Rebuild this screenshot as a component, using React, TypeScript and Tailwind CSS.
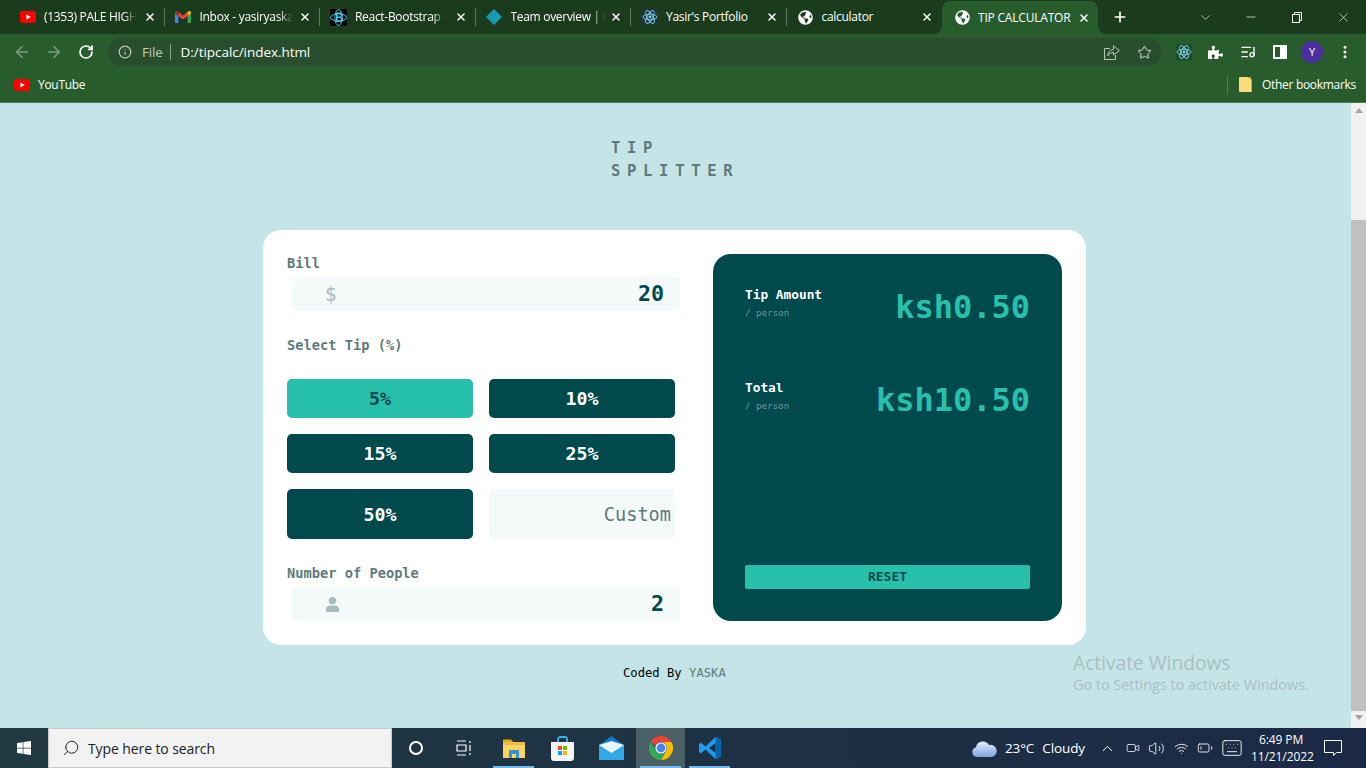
import type { ReactNode } from "react";
import {
  ArrowLeft,
  ArrowRight,
  BatteryLow,
  ChevronDown,
  ChevronUp,
  Info,
  Keyboard,
  ListMusic,
  Minus,
  MoreVertical,
  Plus,
  RotateCw,
  Search,
  Star,
  Video,
  Volume2,
  Wifi,
  X,
} from "lucide-react";
import { FaGlobeAmericas, FaPuzzlePiece, FaUser, FaWindows } from "react-icons/fa";

const uiFont = "font-['Open_Sans','Noto_Sans',sans-serif]";
const monoFont = "font-['DejaVu_Sans_Mono',monospace]";

function YoutubeIcon() {
  return (
    <svg width="16" height="12" viewBox="0 0 16 12">
      <rect width="16" height="12" rx="3" fill="#f00" />
      <path d="M6.4 3.4 10.8 6l-4.4 2.6z" fill="#fff" />
    </svg>
  );
}

function GmailIcon() {
  return (
    <svg width="16" height="12" viewBox="0 0 16 12">
      <path d="M0 2v9a1 1 0 0 0 1 1h2.4V5z" fill="#4285f4" />
      <path d="M16 2v9a1 1 0 0 1-1 1h-2.4V5z" fill="#34a853" />
      <path d="M3.4 5 8 8.4 12.6 5V1L8 4.4 3.4 1z" fill="#ea4335" />
      <path d="M0 2c0-2 2.2-2.6 3.4-1v4L0 2.6z" fill="#c5221f" />
      <path d="M16 2c0-2-2.2-2.6-3.4-1v4L16 2.6z" fill="#fbbc04" />
    </svg>
  );
}

function BootstrapIcon() {
  return (
    <svg width="17" height="17" viewBox="0 0 17 17" className="bg-black">
      <ellipse cx="8.5" cy="8.5" rx="3.6" ry="8" fill="none" stroke="#41c8e8" strokeWidth="1" />
      <ellipse cx="8.5" cy="8.5" rx="8" ry="3.6" fill="none" stroke="#41c8e8" strokeWidth="1" />
      <path d="M6 3.5h4a2.3 2.3 0 0 1 1 4.5 2.5 2.5 0 0 1-1 5H6zM7.6 5v2.6h2a1.3 1.3 0 0 0 0-2.6zM7.6 9v2.6h2.2a1.3 1.3 0 0 0 0-2.6z" fill="#41c8e8" />
    </svg>
  );
}

function DiamondIcon() {
  return (
    <svg width="16" height="16" viewBox="0 0 16 16">
      <path d="M8 0 16 8 8 16 0 8z" fill="#1a9bb0" />
    </svg>
  );
}

function ReactIcon({ box = false }: { box?: boolean }) {
  return (
    <svg width="16" height="16" viewBox="0 0 16 16" className={box ? "bg-[#1d4a2a]" : "bg-[#20343c]"}>
      <g fill="none" stroke="#7fd4ea" strokeWidth="0.9">
        <ellipse cx="8" cy="8" rx="7" ry="2.8" />
        <ellipse cx="8" cy="8" rx="7" ry="2.8" transform="rotate(60 8 8)" />
        <ellipse cx="8" cy="8" rx="7" ry="2.8" transform="rotate(120 8 8)" />
      </g>
      <circle cx="8" cy="8" r="1.4" fill="#7fd4ea" />
    </svg>
  );
}

function ChromeIcon() {
  return (
    <svg width="24" height="24" viewBox="0 0 24 24">
      <path d="M1.6 6A12 12 0 0 1 22.4 6H12a6 6 0 0 0-5.2 3z" fill="#ea4335" />
      <path d="M22.4 6A12 12 0 0 1 12 24l5.2-9a6 6 0 0 0 0-6 6 6 0 0 0-5.2-3z" fill="#fbbc04" />
      <path d="M12 24A12 12 0 0 1 1.6 6l5.2 9a6 6 0 0 0 5.2 3 6 6 0 0 0 5.2-3z" fill="#34a853" />
      <circle cx="12" cy="12" r="5.6" fill="#fff" />
      <circle cx="12" cy="12" r="4.4" fill="#4285f4" />
    </svg>
  );
}

function VsCodeIcon() {
  return (
    <svg width="24" height="24" viewBox="0 0 24 24">
      <path d="M17.5 1 23 3.6v16.8L17.5 23 7.6 13.6 3 17.2 1 16V8l2-1.2 4.6 3.6zM17.5 7 11 12l6.5 5z" fill="#1f9cf0" />
      <path d="M17.5 1 23 3.6v16.8L17.5 23z" fill="#0065a9" />
    </svg>
  );
}

function ExplorerIcon() {
  return (
    <svg width="22" height="20" viewBox="0 0 22 20">
      <path d="M0 1.5h8l2 2.5H0z" fill="#e5a823" />
      <rect y="4" width="22" height="16" fill="#fcd462" />
      <rect y="4" width="22" height="3" fill="#f2bd42" />
      <path d="M6 20v-8h10v8h-3v-4H9v4z" fill="#3a90d8" />
    </svg>
  );
}

function StoreIcon() {
  return (
    <svg width="23" height="25" viewBox="0 0 23 25">
      <path d="M7 6V3a2 2 0 0 1 2-2h5a2 2 0 0 1 2 2v3" fill="none" stroke="#35b4e8" strokeWidth="1.8" />
      <path d="M0 6h23v16a3 3 0 0 1-3 3H3a3 3 0 0 1-3-3z" fill="#f4f4f4" />
      <rect x="7" y="10" width="4" height="4" fill="#f25022" />
      <rect x="12" y="10" width="4" height="4" fill="#7fba00" />
      <rect x="7" y="15" width="4" height="4" fill="#00a4ef" />
      <rect x="12" y="15" width="4" height="4" fill="#ffb900" />
    </svg>
  );
}

function MailIcon() {
  return (
    <svg width="25" height="24" viewBox="0 0 25 24">
      <path d="M0 9 12.5 0 25 9v15H0z" fill="#1479c4" />
      <path d="M0 9h25v15H0z" fill="#33a8e8" />
      <path d="M0 9l12.5 8L25 9l-12.5-4z" fill="#e8f6fd" />
    </svg>
  );
}

function CloudIcon() {
  return (
    <svg width="25" height="17" viewBox="0 0 25 17">
      <defs>
        <linearGradient id="cloud" x1="0" y1="0" x2="0" y2="1">
          <stop offset="0" stopColor="#e4ecfb" />
          <stop offset="1" stopColor="#7da6e0" />
        </linearGradient>
      </defs>
      <path d="M5 17a5 5 0 0 1-1-9.8A7 7 0 0 1 17 5a5.5 5.5 0 0 1 3 12z" fill="url(#cloud)" />
    </svg>
  );
}

function SidePanelIcon() {
  return (
    <svg width="14" height="14" viewBox="0 0 14 14">
      <path d="M0 0h14v14H0zM2 2v10h5V2z" fill="#fff" />
    </svg>
  );
}

function ShareIcon() {
  return (
    <svg width="16" height="15" viewBox="0 0 16 15" fill="none" stroke="#b9c8ba" strokeWidth="1">
      <path d="M6 3.500H.5v11h11V10" />
      <path d="M9.500.8 15.300 5.500 9.500 10V7.400C7 7.400 5 8.600 3.700 11c.2-3.600 2.400-6.300 5.800-6.700z" />
    </svg>
  );
}

function RestoreIcon() {
  return (
    <svg width="10" height="11" viewBox="0 0 10 11" fill="none" stroke="#fff" strokeWidth="1">
      <rect x="0.5" y="2.5" width="7" height="8" />
      <path d="M2.5 2.5v-2h7v8h-2" />
    </svg>
  );
}

function CurveCorner({ side }: { side: "left" | "right" }) {
  return (
    <svg
      width="8"
      height="8"
      viewBox="0 0 8 8"
      className={side === "left" ? "absolute bottom-0 left-[-8px]" : "absolute bottom-0 right-[-8px]"}
    >
      <path d={side === "left" ? "M8 0v8H0a8 8 0 0 0 8-8z" : "M0 0v8h8a8 8 0 0 1-8-8z"} fill="#295c2d" />
    </svg>
  );
}

const tabs: { title: string; icon: ReactNode; faded?: boolean }[] = [
  { title: "(1353) PALE HIGH", icon: <YoutubeIcon />, faded: true },
  { title: "Inbox - yasiryaska", icon: <GmailIcon />, faded: true },
  { title: "React-Bootstrap ·", icon: <BootstrapIcon />, faded: true },
  { title: "Team overview | I", icon: <DiamondIcon />, faded: true },
  { title: "Yasir's Portfolio", icon: <ReactIcon /> },
  { title: "calculator", icon: <FaGlobeAmericas className="text-[15px] text-white" /> },
];

function TabStrip() {
  return (
    <div className={`flex h-[34px] items-end bg-[#1b3b1d] pl-[9px] text-white ${uiFont}`}>
      {tabs.map((tab, i) => (
        <div key={tab.title} className="relative flex h-[34px] w-[155.5px] items-center pl-[10px] pr-[9px]">
          <span className="flex w-[17px] shrink-0 items-center justify-center">{tab.icon}</span>
          <span
            className={`ml-[8px] whitespace-nowrap text-[12px] tracking-[-0.3px] ${
              tab.faded ? "[mask-image:linear-gradient(to_right,black_85%,transparent)]" : ""
            }`}
          >
            {tab.title}
          </span>
          <X size={12} strokeWidth={3} className="ml-auto shrink-0" />
          {i < 5 && <span className="absolute right-0 top-[8px] h-[18px] w-px bg-[#5d7a5f]" />}
        </div>
      ))}
      <div className="relative flex h-[33px] w-[156px] items-center rounded-t-[8px] bg-[#295c2d] pl-[13px] pr-[8px]">
        <CurveCorner side="left" />
        <FaGlobeAmericas className="shrink-0 text-[15px]" />
        <span className="ml-[8px] whitespace-nowrap text-[12px] tracking-[-0.2px]">TIP CALCULATOR</span>
        <X size={12} strokeWidth={3} className="ml-auto" />
        <CurveCorner side="right" />
      </div>
      <div className="flex h-[34px] w-[44px] items-center justify-center">
        <Plus size={16} strokeWidth={2.5} />
      </div>
      <div className="ml-auto flex h-[34px] items-center">
        <div className="flex w-[46px] justify-center">
          <ChevronDown size={15} strokeWidth={1} />
        </div>
        <div className="flex w-[46px] justify-center">
          <Minus size={14} strokeWidth={1.2} />
        </div>
        <div className="flex w-[46px] justify-center">
          <RestoreIcon />
        </div>
        <div className="flex w-[46px] justify-center">
          <X size={15} strokeWidth={1} />
        </div>
      </div>
    </div>
  );
}

function Toolbar() {
  return (
    <div className={`flex h-[36px] items-center bg-[#295c2d] text-white ${uiFont}`}>
      <div className="flex w-[108px] items-center pl-[13px]">
        <ArrowLeft size={18} className="text-[#7f9c80]" />
        <ArrowRight size={18} className="ml-[14px] text-[#7f9c80]" />
        <RotateCw size={16} strokeWidth={2.6} className="ml-[15px]" />
      </div>
      <div className="flex h-[28px] w-[1054px] items-center rounded-full bg-[#284e2d] pl-[10px] pr-[10px]">
        <Info size={14} className="text-[#c0cfc1]" />
        <span className="ml-[10px] text-[13.5px] tracking-[-0.2px] text-[#b9c8ba]">File</span>
        <span className="ml-[7px] h-[16px] w-px bg-[#8aa08b]" />
        <span className="ml-[10px] text-[13.5px] tracking-[-0.05px]">D:/tipcalc/index.html</span>
        <span className="ml-auto flex">
          <ShareIcon />
        </span>
        <Star size={15} strokeWidth={1.6} className="ml-[17px] text-[#d5dfd5]" />
      </div>
      <div className="flex flex-1 items-center pl-[14px]">
        <ReactIcon box />
        <FaPuzzlePiece className="ml-[16px] text-[15px]" />
        <ListMusic size={16} className="ml-[17px]" />
        <span className="ml-[17px] flex">
          <SidePanelIcon />
        </span>
        <span className="ml-[14px] flex h-[22px] w-[22px] items-center justify-center rounded-full bg-[#4d2ea0] text-[11px]">
          Y
        </span>
        <MoreVertical size={16} strokeWidth={2.5} className="ml-[14px]" />
      </div>
    </div>
  );
}

function BookmarksBar() {
  return (
    <div className={`flex h-[33px] items-center border-b border-[#4d7a50] bg-[#295c2d] pb-[3px] pl-[14px] pr-[10px] text-[12px] tracking-[-0.3px] text-white ${uiFont}`}>
      <YoutubeIcon />
      <span className="ml-[8px]">YouTube</span>
      <span className="ml-auto h-[18px] w-px bg-[#5d7a5f]" />
      <svg width="13" height="15" viewBox="0 0 13 15" className="ml-[11px]">
        <path d="M0 1a1 1 0 0 1 1-1h8l4 3v11a1 1 0 0 1-1 1H1a1 1 0 0 1-1-1z" fill="#fbdc7c" />
        <path d="M9 0h3v14h1V3z" fill="#e0a82e" />
      </svg>
      <span className="ml-[10px]">Other bookmarks</span>
    </div>
  );
}

function FieldLabel({ children }: { children: ReactNode }) {
  return <p className="text-[13.7px] font-bold leading-[18px] text-[#5e7a7d]">{children}</p>;
}

function NumberField({ icon, value }: { icon: ReactNode; value: string }) {
  return (
    <div className="ml-[5px] mt-[5px] flex h-[34px] w-[388px] items-center justify-between rounded-[5px] bg-[#f4f9f9] pl-[33px] pr-[16px]">
      <span className="flex text-[#a5bcbd]">{icon}</span>
      <span className="text-[21.6px] font-bold text-[#00494d]">{value}</span>
    </div>
  );
}

function TipButton({ label, active, tall }: { label: string; active?: boolean; tall?: boolean }) {
  return (
    <button
      className={`rounded-[5px] text-[18.3px] font-bold ${tall ? "h-[50px] pt-[1px]" : "h-[39px]"} ${
        active ? "bg-[#26c0ab] text-[#00494d]" : "bg-[#00494d] text-white"
      }`}
    >
      {label}
    </button>
  );
}

function ResultRow({ title, amount, className }: { title: string; amount: string; className: string }) {
  return (
    <div className={`flex items-start justify-between ${className}`}>
      <div>
        <p className="text-[12.8px] font-bold leading-[18px] text-white">{title}</p>
        <p className="text-[9.2px] leading-[18px] text-[#6b9598]">/ person</p>
      </div>
      <p className="mt-[1px] text-[32px] font-bold leading-[40px] text-[#26c0ab]">{amount}</p>
    </div>
  );
}

function TipCard() {
  return (
    <div className={`ml-[263px] mt-[47px] flex h-[415px] w-[823px] rounded-[18px] bg-white p-[24px] ${monoFont}`}>
      <div className="w-[426px] shrink-0">
        <FieldLabel>Bill</FieldLabel>
        <NumberField icon={<span className="text-[19px] leading-none">$</span>} value="20" />
        <div className="mt-[25px]">
          <FieldLabel>Select Tip (%)</FieldLabel>
        </div>
        <div className="mt-[25px] grid w-[388px] grid-cols-2 gap-x-[16px] gap-y-[16px]">
          <TipButton label="5%" active />
          <TipButton label="10%" />
          <TipButton label="15%" />
          <TipButton label="25%" />
          <TipButton label="50%" tall />
          <div className="flex h-[50px] items-center justify-end rounded-[5px] bg-[#f4f9f9] pr-[4px] pt-[2px] text-[18.6px] text-[#5e7a7d]">
            Custom
          </div>
        </div>
        <div className="mt-[25px]">
          <FieldLabel>Number of People</FieldLabel>
        </div>
        <NumberField icon={<FaUser className="text-[15px]" />} value="2" />
      </div>
      <div className="flex w-[349px] flex-col rounded-[18px] bg-[#00494d] px-[32px] pb-[32px] pt-[32px]">
        <ResultRow title="Tip Amount" amount="ksh0.50" className="" />
        <ResultRow title="Total" amount="ksh10.50" className="mt-[52px]" />
        <button className="mt-auto h-[24px] rounded-[2px] bg-[#26c0ab] text-[13px] font-bold text-[#00494d]">
          RESET
        </button>
      </div>
    </div>
  );
}

function Scrollbar() {
  return (
    <div className="flex w-[15px] shrink-0 flex-col items-center bg-[#f1f1f1]">
      <span className="mt-[5px] h-0 w-0 border-x-[4px] border-b-[5px] border-x-transparent border-b-[#a3a3a3]" />
      <span className="mt-[107px] h-[491px] w-full bg-[#c1c1c1]" />
      <span className="mt-[4px] h-0 w-0 border-x-[4px] border-t-[5px] border-x-transparent border-t-[#a3a3a3]" />
    </div>
  );
}

const pinned: { key: string; icon: ReactNode; open?: boolean; current?: boolean }[] = [
  { key: "explorer", icon: <ExplorerIcon />, open: true },
  { key: "store", icon: <StoreIcon /> },
  { key: "mail", icon: <MailIcon /> },
  { key: "chrome", icon: <ChromeIcon />, open: true, current: true },
  { key: "code", icon: <VsCodeIcon />, open: true },
];

function Taskbar() {
  return (
    <div className={`flex h-[40px] items-center bg-gradient-to-r from-[#213a42] to-[#1b2946] text-white ${uiFont}`}>
      <div className="flex w-[48px] justify-center">
        <FaWindows className="text-[16px]" />
      </div>
      <div className="flex h-[40px] w-[344px] items-center border border-[#c8c8c8] bg-[#f2f2f2] pl-[13px] text-[14px] tracking-[-0.1px] text-[#222]">
        <Search size={18} strokeWidth={1.3} className="-scale-x-100" />
        <span className="ml-[8px]">Type here to search</span>
      </div>
      <div className="flex w-[48px] justify-center">
        <span className="h-[14px] w-[14px] rounded-full border-2 border-white" />
      </div>
      <div className="mr-[1px] flex w-[48px] justify-center">
        <svg width="16" height="16" viewBox="0 0 16 16" fill="none" stroke="#fff" strokeWidth="1.2">
          <path d="M1 1h9M1 15h9M1 5h9v6H1zM14 1v2M14 5v6M14 13v2" />
        </svg>
      </div>
      {pinned.map((app) => (
        <div
          key={app.key}
          className={`relative flex h-[40px] w-[49px] items-center justify-center ${app.current ? "bg-[#4b5f67]" : ""}`}
        >
          {app.icon}
          {app.open && <span className="absolute bottom-0 left-[4px] right-[4px] h-[2px] bg-[#76b9ed]" />}
        </div>
      ))}
      <div className="ml-auto flex items-center pr-[24px] text-[13.5px]">
        <CloudIcon />
        <span className="ml-[8px] whitespace-nowrap tracking-[-0.1px]">23°C</span>
        <span className="ml-[8px] tracking-[-0.1px]">Cloudy</span>
        <ChevronUp size={17} strokeWidth={1.4} className="ml-[14px]" />
        <Video size={14} strokeWidth={1.3} className="ml-[10px]" />
        <Volume2 size={17} strokeWidth={1.2} className="ml-[8px]" />
        <Wifi size={15} strokeWidth={1.4} className="ml-[9px]" />
        <BatteryLow size={16} strokeWidth={1.3} className="ml-[8px]" />
        <Keyboard size={22} strokeWidth={1} className="ml-[8px]" />
        <div className="ml-[8px] w-[60px] text-center text-[12px] leading-[17px] tracking-[-0.1px]">
          <p>6:49 PM</p>
          <p>11/21/2022</p>
        </div>
        <svg width="18" height="17" viewBox="0 0 18 17" fill="none" stroke="#fff" className="ml-[13px]">
          <path d="M.5.5h17v12h-5l-3 3v-3H.5z" />
        </svg>
      </div>
    </div>
  );
}

export default function App() {
  return (
    <div className="relative flex h-[768px] w-[1366px] flex-col overflow-hidden bg-[#c5e4e7]">
      <TabStrip />
      <Toolbar />
      <BookmarksBar />
      <main className="flex min-h-0 flex-1">
        <div className={`flex-1 ${monoFont}`}>
          <h1 className="ml-[611px] mt-[34px] text-[15.5px] font-bold leading-[23px] tracking-[6.7px] text-[#5e7a7d]">
            TIP
            <br />
            SPLITTER
          </h1>
          <TipCard />
          <p className="ml-[623px] mt-[19px] text-[12.2px] leading-[18px] text-black">
            Coded By <span className="text-[#5e7a7d]">YASKA</span>
          </p>
        </div>
        <Scrollbar />
      </main>
      <Taskbar />
      <div className={`absolute left-[1073px] top-[650px] text-[#a9bfc3] ${uiFont}`}>
        <p className="text-[19.2px] leading-[25px]">Activate Windows</p>
        <p className="text-[14.4px] leading-[19px]">Go to Settings to activate Windows.</p>
      </div>
    </div>
  );
}
